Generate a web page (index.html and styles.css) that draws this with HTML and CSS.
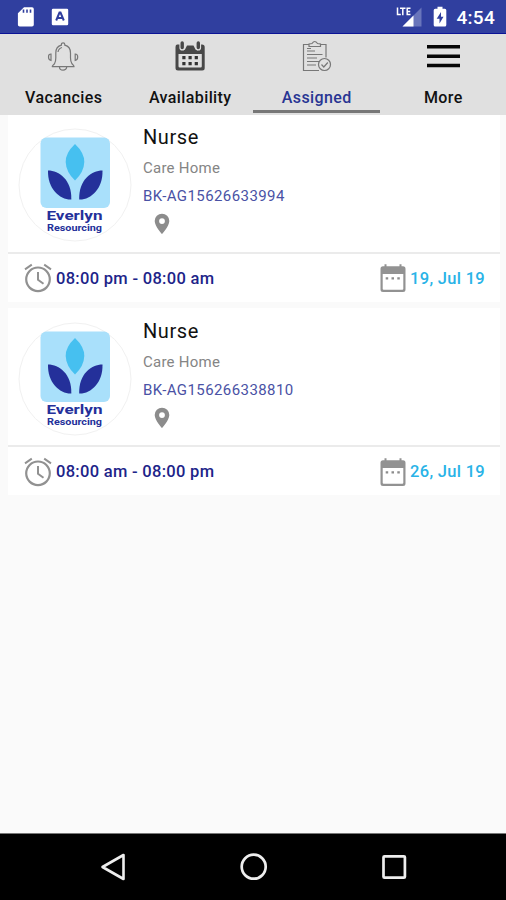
FILE: index.html
```html
<!DOCTYPE html>
<html lang="en">
<head>
<meta charset="utf-8">
<title>Assigned</title>
<link rel="stylesheet" href="styles.css">
</head>
<body>
<svg width="0" height="0" class="defs">
  <symbol id="mark" viewBox="18 128 114 114">
    <circle cx="75" cy="185" r="56" fill="#fff" stroke="#f1f1f1"/>
    <rect x="40.500" y="137.500" width="69.500" height="70.500" rx="6" fill="#a9e0fb"/>
    <path d="M75 144Q84.500 153 84.300 162Q84 172 75 180.500Q66 172 65.700 162Q65.500 153 75 144Z" fill="#46c0f0"/>
    <path d="M48 170.500C59 170.500 72 180 71.300 199.500C60 200 47.500 189 48 170.500Z" fill="#24309a"/>
    <path d="M102.500 170.500C91.500 170.500 78.500 180 79.200 199.500C90.500 200 103 189 102.500 170.500Z" fill="#24309a"/>
  </symbol>
  <symbol id="pin" viewBox="0 0 16 22">
    <path fill-rule="evenodd" d="M8 .7A7.300 7.300 0 0 0 .7 8C.7 13.300 8 21 8 21S15.300 13.300 15.300 8A7.300 7.300 0 0 0 8 .7ZM8 5.200a2.900 2.900 0 1 1 0 5.800a2.900 2.900 0 0 1 0-5.800Z" fill="#8c8c8c"/>
  </symbol>
  <symbol id="alarm" viewBox="0 0 28 30">
    <g fill="none" stroke="#919191" stroke-width="2.200">
      <circle cx="14" cy="16.300" r="11.800"/>
      <path d="M1 6.300 7.800 1.700M20.200 1.700 27 6.300M14 9v7.700l5.500 4" stroke-width="2"/>
    </g>
  </symbol>
  <symbol id="date" viewBox="0 0 28 30">
    <path fill-rule="evenodd" d="M5.500 1.300h2v2h13v-2h2v2H24q2.500 0 2.500 2.500V26.500q0 2.500-2.500 2.500H4q-2.500 0-2.500-2.500V5.800Q1.500 3.300 4 3.300h1.500ZM3.700 11V25.800q0 1 1 1H23.300q1 0 1-1V11Z" fill="#929292"/>
    <path d="M6.700 14.200h2.500v2.200H6.700ZM12.500 14.200H15v2.200h-2.500ZM18.300 14.200h2.500v2.200h-2.500Z" fill="#8c8c8c"/>
  </symbol>
</svg>
<div class="screen">
  <header class="status">
    <div class="status-left">
      <svg width="18" height="22" viewBox="0 0 18 22"><path d="M7 1.200h8q1.800 0 1.800 1.800v15.800q0 1.800-1.800 1.800H2.700Q.9 20.600.9 18.800V7.200Z" fill="#fff"/><path d="M6.500 3.500v3.300M10 3.500v3.300M13.500 3.500v3.300" stroke="#303f9f" stroke-width="1.600"/></svg>
      <svg width="18" height="18" viewBox="0 0 18 18"><rect x=".8" y=".8" width="16.400" height="16.400" rx="1.300" fill="#fff"/><path d="M5.200 12.500 8.500 4.500h1l3.300 8M6.500 10h5" stroke="#303f9f" stroke-width="2" fill="none"/></svg>
    </div>
    <div class="status-right">
      <svg width="28" height="22" viewBox="0 0 28 22"><path d="M6.500 20.500 25.500 1.500v19Z" fill="#6975bb"/><path d="M6.500 20.500 17.500 9.500v11Z" fill="#fff"/><path d="M0 0h15v10H0Z" fill="#303f9f"/><path d="M1.500 1.500v7h3.300M4 2.300h5.500M6.800 2.300V9.200M14.500 2.300h-3.300v6.200h3.300M11.200 5.400h3" stroke="#fff" stroke-width="1.500" fill="none"/></svg>
      <svg width="14" height="22" viewBox="0 0 14 22"><path d="M4.500.8h5v2h2.300q1.500 0 1.500 1.500v14.800q0 1.500-1.500 1.500H2.200Q.7 20.600.7 19.100V4.300q0-1.500 1.500-1.500h2.300Z" fill="#fff"/><path d="M8 6 3.700 12.800h2.800V17.500l4-6.800H8Z" fill="#303f9f"/></svg>
      <span class="clock">4:54</span>
    </div>
  </header>
  <nav class="tabs">
    <div class="tab">
      <svg width="34" height="32" viewBox="0 0 34 32"><g fill="none" stroke="#777" stroke-width="1.200"><path d="M8.500 23.800Q6 26 6.300 26.700H28Q28.300 26 26 23.800Q24.500 21.500 24.500 18V13Q24.500 6.500 18.800 5.200V4.500a1.700 1.700 0 0 0-3.400 0V5.200Q9.800 6.500 9.800 13V18Q9.800 21.500 8.500 23.800ZM13.500 27a3.600 3.200 0 0 0 7.200 0M12 12Q12.500 8.500 16 7.500"/><path d="M5 14Q2.500 14 2.500 17T5 20.500ZM29.200 14q2.500 0 2.500 3t-2.500 3.500Z"/></g></svg>
      <span>Vacancies</span>
    </div>
    <div class="tab">
      <svg width="32" height="32" viewBox="0 0 32 32"><path fill-rule="evenodd" d="M3 4.500h3.500v3.500q1.700 3.500 4.500 1.500l2-4h6.500l2 4q2.800 2 4.500-1.500v-3.500h2Q30.700 4.500 30.700 7V28q0 2.500-2.500 2.500H4Q1.500 30.500 1.500 28V7Q1.500 4.500 3 4.500ZM4.500 14v12.200q0 1.300 1.300 1.300H26.500q1.300 0 1.300-1.300V14Z" fill="#484848"/><path d="M8.200 3.200v4.600M24.300 3.200v4.600" stroke="#e0e0e0" stroke-width="5.600" stroke-linecap="round"/><path d="M8.200 3v4.600M24.300 3v4.600" stroke="#484848" stroke-width="3.400" stroke-linecap="round"/><path d="M8.300 16h3.200v3.200H8.300ZM14.500 16h3.200v3.200h-3.200ZM20.700 16h3.200v3.200h-3.200ZM8.300 22h3.200v3.200H8.300ZM14.500 22h3.200v3.200h-3.200ZM20.700 22h3.200v3.200h-3.200Z" fill="#333"/></svg>
      <span>Availability</span>
    </div>
    <div class="tab active">
      <svg width="32" height="32" viewBox="0 0 32 32"><g fill="none" stroke="#777" stroke-width="1.200"><path d="M9 4.500H3.500V30.500H19M20.500 4.500H26V17.500M9 6.500V4L12 3.500Q14.700-.5 17.500 3.500L20.500 4V6.500ZM7 11h8M7 14.500h15.500M7 18h10M7 21.500h12M7 25h9M7 8.500h4"/><circle cx="24.500" cy="24.500" r="6" fill="#e0e0e0"/><path d="m21.500 24.500 2.300 2.500 4-4.500"/></g></svg>
      <span>Assigned</span>
    </div>
    <div class="tab">
      <svg width="34" height="32" viewBox="0 0 34 32"><path d="M1 6.700h33M1 16.300h33M1 25.600h33" stroke="#050505" stroke-width="3.500"/></svg>
      <span>More</span>
    </div>
  </nav>
  <main class="list">
    <article class="card">
      <div class="info">
        <svg class="logo" viewBox="0 0 114 114"><use href="#mark" width="114" height="114"/><text x="28.500" y="91.500" textLength="56" lengthAdjust="spacingAndGlyphs" class="logo-name">Everlyn</text><text x="29" y="103" textLength="55" lengthAdjust="spacingAndGlyphs" class="logo-sub">Resourcing</text></svg>
        <div class="details">
          <h2>Nurse</h2>
          <p class="place">Care Home</p>
          <p class="ref">BK-AG15626633994</p>
          <svg class="pin"><use href="#pin"/></svg>
        </div>
      </div>
      <div class="foot">
        <svg class="ico"><use href="#alarm"/></svg><span class="time">08:00 pm - 08:00 am</span>
        <svg class="ico cal"><use href="#date"/></svg><span class="date">19, Jul 19</span>
      </div>
    </article>
    <article class="card">
      <div class="info">
        <svg class="logo" viewBox="0 0 114 114"><use href="#mark" width="114" height="114"/><text x="28.500" y="91.500" textLength="56" lengthAdjust="spacingAndGlyphs" class="logo-name">Everlyn</text><text x="29" y="103" textLength="55" lengthAdjust="spacingAndGlyphs" class="logo-sub">Resourcing</text></svg>
        <div class="details">
          <h2>Nurse</h2>
          <p class="place">Care Home</p>
          <p class="ref">BK-AG156266338810</p>
          <svg class="pin"><use href="#pin"/></svg>
        </div>
      </div>
      <div class="foot">
        <svg class="ico"><use href="#alarm"/></svg><span class="time">08:00 am - 08:00 pm</span>
        <svg class="ico cal"><use href="#date"/></svg><span class="date">26, Jul 19</span>
      </div>
    </article>
  </main>
  <footer class="navbar">
    <svg width="28" height="30" viewBox="0 0 28 30"><path d="M3.500 15 24.500 3v24Z" fill="none" stroke="#eee" stroke-width="2.600" stroke-linejoin="round"/></svg>
    <svg width="28" height="30" viewBox="0 0 28 30"><circle cx="13.700" cy="14.700" r="12" fill="none" stroke="#eee" stroke-width="2.700"/></svg>
    <svg width="28" height="30" viewBox="0 0 28 30"><rect x="3.500" y="4.300" width="21.400" height="21.400" rx="1" fill="none" stroke="#eee" stroke-width="2.700"/></svg>
  </footer>
</div>
</body>
</html>
```
FILE: styles.css
```css
* { box-sizing: border-box; }
body { margin: 0; font-family: Roboto, "Liberation Sans", sans-serif; background: #fafafa; }
svg { display: block; flex: none; }
.defs { position: absolute; }
.screen { width: 506px; height: 900px; display: flex; flex-direction: column; overflow: hidden; }
.status { height: 34px; background: #303f9f; border-bottom: 1px solid #0b1396; display: flex; justify-content: space-between; padding: 0 11px 0 17px; color: #fff; }
.status-left { display: flex; align-items: center; gap: 16px; padding-top: 1px; }
.status-right { display: flex; align-items: center; gap: 9px; padding-top: 1px; }
.clock { font-size: 19px; font-weight: 500; letter-spacing: .3px; }
.tabs { height: 80.500px; background: #e0e0e0; display: grid; grid-template-columns: repeat(4, 1fr); }
.tab { display: flex; flex-direction: column; align-items: center; height: 79px; padding-top: 6px; gap: 14px; font-size: 16px; line-height: 24px; font-weight: 500; letter-spacing: .4px; color: #111; border-bottom: 3px solid transparent; }
.tab span { padding-left: 1px; }
.tab.active { color: #283593; border-bottom-color: #777; }
.list { flex: 1; padding: 0 6px 0 8px; display: flex; flex-direction: column; gap: 6.500px; }
.card { background: #fff; height: 187px; }
.info { height: 139px; border-bottom: 2px solid #ebebeb; display: flex; padding: 13.500px 0 0 10px; gap: 11px; }
.logo { width: 114px; height: 114px; }
.logo-name { font: 700 13px Roboto, sans-serif; fill: #24309a; }
.logo-sub { font: 700 8.500px Roboto, sans-serif; fill: #24309a; }
.details h2, .details p { margin: 0; font-weight: 400; }
.details h2 { font-size: 20px; line-height: 24px; letter-spacing: .6px; margin-top: -3px; color: #111; }
.place { font-size: 15px; line-height: 20px; letter-spacing: .25px; color: #858585; padding-top: 9px; }
.ref { font-size: 15px; line-height: 20px; letter-spacing: .42px; color: #4a52a5; padding-top: 8px; height: 28px; }
.pin { width: 16px; height: 22px; margin: 7px 0 0 11px; }
.foot { height: 48px; display: flex; align-items: center; padding: 1px 15px 0 16px; font-size: 16.500px; font-weight: 500; }
.ico { width: 28px; height: 30px; }
.time { margin-left: 4px; color: #1d2489; letter-spacing: .3px; }
.cal { margin-left: auto; }
.date { margin-left: 3px; color: #29b3e7; letter-spacing: .3px; }
.navbar { height: 67px; background: #000; border-top: 1px solid #777; display: flex; justify-content: space-between; align-items: center; padding: 0 98px 0 99px; }
```
